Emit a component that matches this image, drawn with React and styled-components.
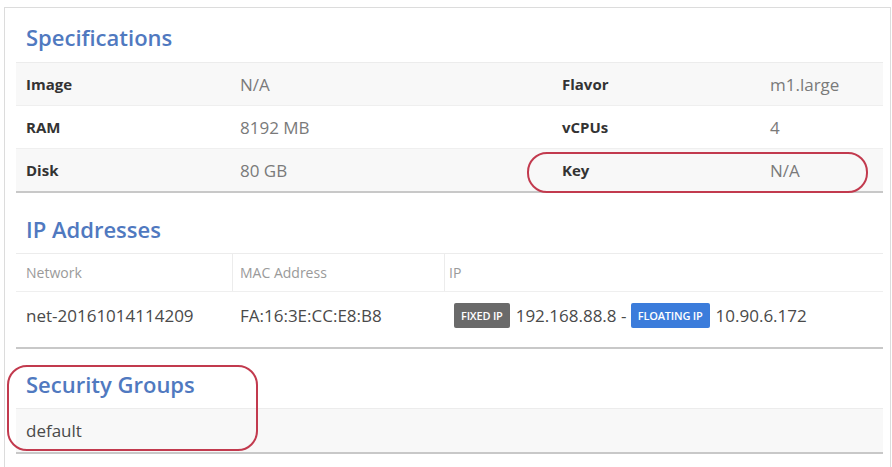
import React from 'react';
import styled, { createGlobalStyle } from 'styled-components';

const GlobalStyle = createGlobalStyle`
  body {
    margin: 0;
    background: #fff;
    font-family: "Open Sans", "Liberation Sans", sans-serif;
  }
`;

const Page = styled.div`
  position: relative;
  width: 892px;
  height: 467px;
  padding: 7px 1px 0 4px;
  box-sizing: border-box;
`;

const Panel = styled.div`
  border: 1px solid #dcdcdc;
  border-bottom: none;
  padding: 14px 7px 13px 11px;
  height: 460px;
  box-sizing: border-box;
`;

const Title = styled.h3`
  margin: ${p => p.top || 0}px 0 ${p => p.gap || 9}px 10px;
  font-size: 22px;
  line-height: 30px;
  font-weight: 600;
  color: #5079c0;
`;

const Table = styled.div`
  border-top: 1px solid #ececec;
  border-bottom: 2px solid #c8c8c8;
`;

const Row = styled.div`
  display: grid;
  grid-template-columns: ${p => p.cols};
  align-items: center;
  box-sizing: border-box;
  height: ${p => p.h}px;
  padding-bottom: ${p => p.pb || 0}px;
  background: ${p => p.striped ? '#f8f8f8' : '#fff'};
  & + & {
    border-top: 1px solid #efefef;
  }
`;

const Label = styled.div`
  padding-left: ${p => p.pad || 10}px;
  font-size: 15px;
  font-weight: 700;
  color: #333;
`;

const Value = styled.div`
  padding-left: ${p => p.pad || 8}px;
  font-size: 17px;
  color: ${p => p.dark ? '#4a4a4a' : '#7a7a7a'};
  white-space: nowrap;
`;

const HeadCell = styled.div`
  height: 100%;
  display: flex;
  align-items: center;
  padding-left: ${p => p.pad || 10}px;
  font-size: 14px;
  color: #9a9a9a;
  border-left: ${p => p.divider ? '1px solid #ececec' : 'none'};
`;

const Badge = styled.span`
  display: inline-block;
  vertical-align: 2px;
  padding: 0 7px;
  margin: 0 6px 0 0;
  border-radius: 2px;
  font-size: 11px;
  font-weight: 600;
  letter-spacing: -0.2px;
  line-height: 25px;
  color: #fff;
  background: ${p => p.kind === 'floating' ? '#3b7cdb' : '#6a6a6a'};
`;

const Mark = styled.div`
  position: absolute;
  border: 2px solid #c23a4e;
  border-radius: ${p => p.r}px;
  box-sizing: border-box;
  pointer-events: none;
`;

const SPEC_COLS = '216px 320px 210px 1fr';
const IP_COLS = '216px 212px 1fr';

const specs = [
  ['Image', 'N/A', 'Flavor', 'm1.large'],
  ['RAM', '8192 MB', 'vCPUs', '4'],
  ['Disk', '80 GB', 'Key', 'N/A'],
];

export default function App() {
  return (
    <Page>
      <GlobalStyle />
      <Panel>
        <Title gap={10}>Specifications</Title>
        <Table>
          {specs.map(([l1, v1, l2, v2], i) => (
            <Row key={l1} cols={SPEC_COLS} h={i === 0 ? 42 : 43} striped={i % 2 === 0}>
              <Label>{l1}</Label>
              <Value>{v1}</Value>
              <Label>{l2}</Label>
              <Value>{v2}</Value>
            </Row>
          ))}
        </Table>

        <Title top={21}>IP Addresses</Title>
        <Table>
          <Row cols={IP_COLS} h={37}>
            <HeadCell>Network</HeadCell>
            <HeadCell divider pad={7}>MAC Address</HeadCell>
            <HeadCell divider pad={4}>IP</HeadCell>
          </Row>
          <Row cols={IP_COLS} h={56} pb={8}>
            <Value dark pad={10}>net-20161014114209</Value>
            <Value dark>FA:16:3E:CC:E8:B8</Value>
            <Value dark pad={10}>
              <Badge>FIXED IP</Badge>192.168.88.8 - <Badge kind="floating">FLOATING IP</Badge>10.90.6.172
            </Value>
          </Row>
        </Table>

        <Title top={20}>Security Groups</Title>
        <Table>
          <Row cols="1fr" h={43} striped>
            <Value dark pad={10}>default</Value>
          </Row>
        </Table>
      </Panel>
      <Mark r={20} style={{ left: 527, top: 152, width: 341, height: 41 }} />
      <Mark r={20} style={{ left: 7, top: 365, width: 251, height: 86 }} />
    </Page>
  );
}
